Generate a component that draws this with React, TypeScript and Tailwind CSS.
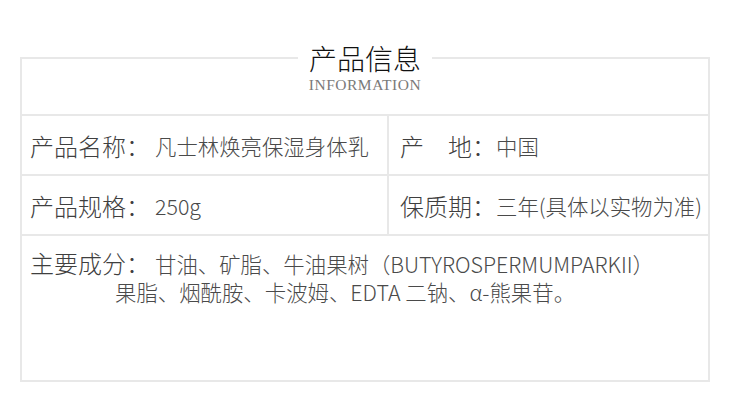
import React from "react";

const cjk = { fontFamily: '"Noto Sans CJK SC", "Noto Sans", sans-serif' };

function Label({ children }: { children: React.ReactNode }) {
  return <span className="text-[24px] leading-[28px] font-light text-[#3f3f3f]">{children}</span>;
}

function Value({ children, left }: { children: React.ReactNode; left?: boolean }) {
  return (
    <span className={(left ? "ml-[5px] " : "ml-0 ") + "text-[21.4px] leading-[28px] font-light text-[#4a4a4a]"}>
      {children}
    </span>
  );
}

export default function App() {
  return (
    <div className="w-[730px] h-[400px] bg-white px-[20px] pt-[44px]" style={cjk}>
      <fieldset className="border-2 border-[#e8e8e8] h-[338px] flex flex-col">
        <legend className="mx-auto px-[11px] text-[28px] leading-[28px] font-light text-[#111]">产品信息</legend>
        <div className="h-[42px] pt-[5px] text-center">
          <div
            className="text-[15.5px] leading-[16px] tracking-[0.5px] text-[#7a7a7a]"
            style={{ fontFamily: '"Liberation Serif", serif' }}
          >
            INFORMATION
          </div>
        </div>
        <div className="grid grid-cols-[365px_1fr] border-t-2 border-[#e8e8e8] h-[60px]">
          <div className="flex items-center pl-[8px] pt-[2px]">
            <Label>产品名称：</Label>
            <Value left>凡士林焕亮保湿身体乳</Value>
          </div>
          <div className="flex items-center pl-[11px] pt-[2px] border-l-2 border-[#e8e8e8]">
            <Label>产　地：</Label>
            <Value>中国</Value>
          </div>
        </div>
        <div className="grid grid-cols-[365px_1fr] border-t-2 border-[#e8e8e8] h-[60px]">
          <div className="flex items-center pl-[8px] pt-[1px]">
            <Label>产品规格：</Label>
            <Value left>250g</Value>
          </div>
          <div className="flex items-center pl-[11px] pt-[1px] border-l-2 border-[#e8e8e8]">
            <Label>保质期：</Label>
            <Value>三年(具体以实物为准)</Value>
          </div>
        </div>
        <div className="flex-1 border-t-2 border-[#e8e8e8] pt-[13px]">
          <div className="flex items-baseline pl-[8px] whitespace-nowrap">
            <Label>主要成分：</Label>
            <Value left>甘油、矿脂、牛油果树（BUTYROSPERMUMPARKII）</Value>
          </div>
          <div className="pl-[93px] text-[21.4px] leading-[28px] font-light text-[#4a4a4a] whitespace-nowrap">
            果脂、烟酰胺、卡波姆、EDTA 二钠、α-熊果苷。
          </div>
        </div>
      </fieldset>
    </div>
  );
}
